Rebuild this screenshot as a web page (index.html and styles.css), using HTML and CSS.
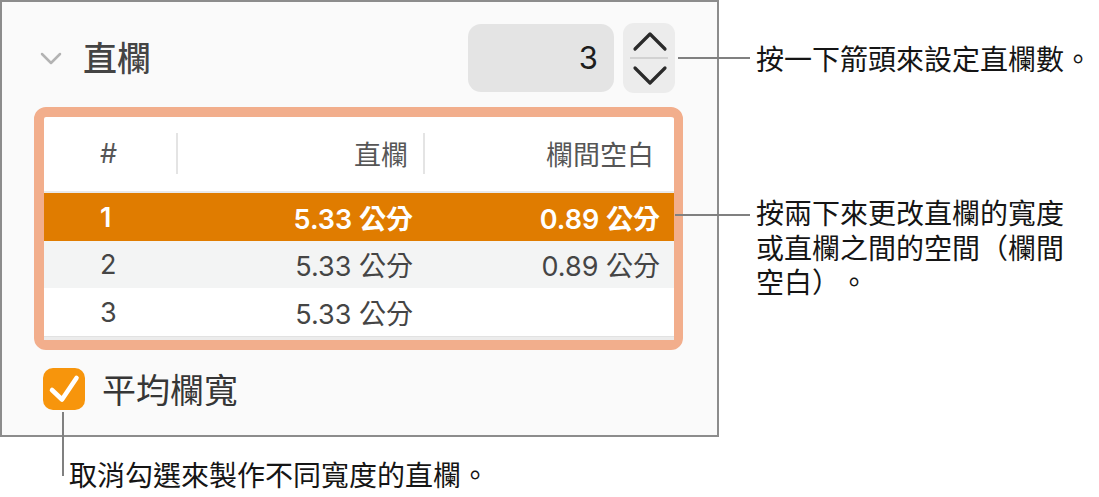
FILE: index.html
```html
<!DOCTYPE html>
<html lang="zh-Hant">
<head>
<meta charset="utf-8">
<title>直欄</title>
<link rel="stylesheet" href="styles.css">
</head>
<body>
<div class="stage">
  <div class="panel">
    <div class="head">
      <svg class="disclosure" width="22" height="13" viewBox="0 0 22 13"><path d="M2 2 L11 11 L20 2" fill="none" stroke="#b3b3b3" stroke-width="2.5" stroke-linecap="round" stroke-linejoin="round"/></svg>
      <span class="title">直欄</span>
      <span class="spacer"></span>
      <div class="field">3</div>
      <div class="stepper">
        <svg width="52" height="70" viewBox="0 0 52 70">
          <path d="M12 26 L27 11 L42 26" fill="none" stroke="#2a2a2a" stroke-width="3.2" stroke-linecap="round" stroke-linejoin="round"/>
          <line x1="7" y1="35" x2="45" y2="35" stroke="#d2d2d2" stroke-width="2"/>
          <path d="M12 45 L27 60 L42 45" fill="none" stroke="#2a2a2a" stroke-width="3.2" stroke-linecap="round" stroke-linejoin="round"/>
        </svg>
      </div>
    </div>
    <div class="tablebox">
      <div class="table">
        <div class="row hdr">
          <div class="c1">#</div>
          <div class="c2">直欄</div>
          <div class="c3">欄間空白</div>
        </div>
        <div class="row sel">
          <div class="c1">1</div>
          <div class="c2">5.33 公分</div>
          <div class="c3">0.89 公分</div>
        </div>
        <div class="row alt">
          <div class="c1">2</div>
          <div class="c2">5.33 公分</div>
          <div class="c3">0.89 公分</div>
        </div>
        <div class="row">
          <div class="c1">3</div>
          <div class="c2">5.33 公分</div>
          <div class="c3"></div>
        </div>
        <div class="foot"></div>
      </div>
    </div>
    <div class="check">
      <span class="box"><svg width="42" height="42" viewBox="0 0 42 42"><path d="M9 22 L19 31.5 L33.5 10" fill="none" stroke="#fff" stroke-width="4.6" stroke-linecap="round" stroke-linejoin="round"/></svg></span>
      <span class="label">平均欄寬</span>
    </div>
  </div>

  <div class="lead lead1"></div>
  <div class="note note1">按一下箭頭來設定直欄數。</div>

  <div class="lead lead2"></div>
  <div class="note note2">按兩下來更改直欄的寬度<br>或直欄之間的空間（欄間<br>空白）。</div>

  <div class="lead lead3"></div>
  <div class="note note3">取消勾選來製作不同寬度的直欄。</div>
</div>
</body>
</html>
```
FILE: styles.css
```css
* { box-sizing: border-box; }
html, body { margin: 0; padding: 0; background: #ffffff; }
body {
  font-family: Inter, "Noto Sans CJK TC", sans-serif;
  color: #1a1a1a;
  text-spacing-trim: space-all;
}
.stage {
  position: relative;
  width: 1099px;
  height: 497px;
  overflow: hidden;
}
.panel {
  width: 719px;
  height: 437px;
  border: 2px solid #8c8c8c;
  background: #fafafa;
  padding: 21px 42px 0 0;
}
.head {
  display: flex;
  align-items: center;
  height: 70px;
  padding-left: 38px;
}
.disclosure { display: block; flex: none; }
.title {
  margin-left: 21px;
  font-size: 34px;
  line-height: 40px;
  font-weight: 500;
  color: #444444;
  font-family: "Noto Sans CJK TC", sans-serif;
  margin-top: -2px;
}
.spacer { flex: 1; }
.field {
  width: 146px;
  height: 68px;
  border-radius: 13px;
  background: #e4e4e4;
  font-size: 31px;
  line-height: 68px;
  text-align: right;
  padding-right: 16px;
  color: #1e1e1e;
}
.stepper {
  margin-left: 9px;
  width: 52px;
  height: 70px;
  border-radius: 11px;
  background: #ececec;
}
.stepper svg { display: block; }
.tablebox {
  margin: 14px 0 0 32px;
  width: 649px;
  height: 243px;
  border: 10px solid #f2ae8c;
  border-right-width: 9px;
  border-radius: 12px;
  background: #ffffff;
}
.table {
  display: flex;
  flex-direction: column;
  height: 100%;
  font-size: 27px;
  color: #454545;
}
.row {
  display: grid;
  grid-template-columns: 133px 247px 1fr;
  align-items: center;
  height: 48px;
}
.row > div { white-space: nowrap; }
.c1 { padding-left: 56px; }
.c2 { text-align: right; padding-right: 11px; }
.c3 { text-align: right; padding-right: 14px; }
.hdr {
  height: 76px;
  border-bottom: 2px solid #e9e9e9;
  color: #565656;
}
.hdr .c2, .hdr .c3 { font-family: "Noto Sans CJK TC", sans-serif; }
.hdr .c2 { padding-right: 16px; }
.hdr .c3 { padding-right: 20px; }
.hdr .c2, .hdr .c3 {
  position: relative;
}
.hdr .c2::before, .hdr .c3::before {
  content: "";
  position: absolute;
  left: -1px;
  top: -2px;
  width: 2px;
  height: 41px;
  background: #e4e4e4;
}
.hdr > div { line-height: 38px; }
.sel { background: #e07c00; color: #ffffff; font-weight: 600; }
.alt { background: #f3f4f4; height: 47px; }
.foot { flex: 1; background: #ececec; border-top: 1px solid #e2e2e2; }
.check {
  display: flex;
  align-items: center;
  margin-top: 18px;
  padding-left: 41px;
}
.box {
  width: 42px;
  height: 42px;
  border-radius: 10px;
  background: #f7950c;
  flex: none;
}
.box svg { display: block; }
.label {
  margin-left: 17px;
  font-size: 34px;
  line-height: 42px;
  color: #363636;
  font-family: "Noto Sans CJK TC", sans-serif;
}
.lead { position: absolute; background: #808080; }
.lead1 { left: 678px; top: 57px; width: 72px; height: 2px; }
.lead2 { left: 675px; top: 214px; width: 75px; height: 2px; }
.lead3 { left: 62px; top: 412px; width: 2px; height: 64px; }
.note {
  position: absolute;
  font-family: "Noto Sans CJK TC", sans-serif;
  font-size: 28px;
  color: #151515;
  white-space: nowrap;
}
.note1 { left: 756px; top: 40px; line-height: 36px; }
.note2 { left: 756px; top: 195px; line-height: 34.5px; }
.note3 { left: 69px; top: 456px; line-height: 36px; }
```
